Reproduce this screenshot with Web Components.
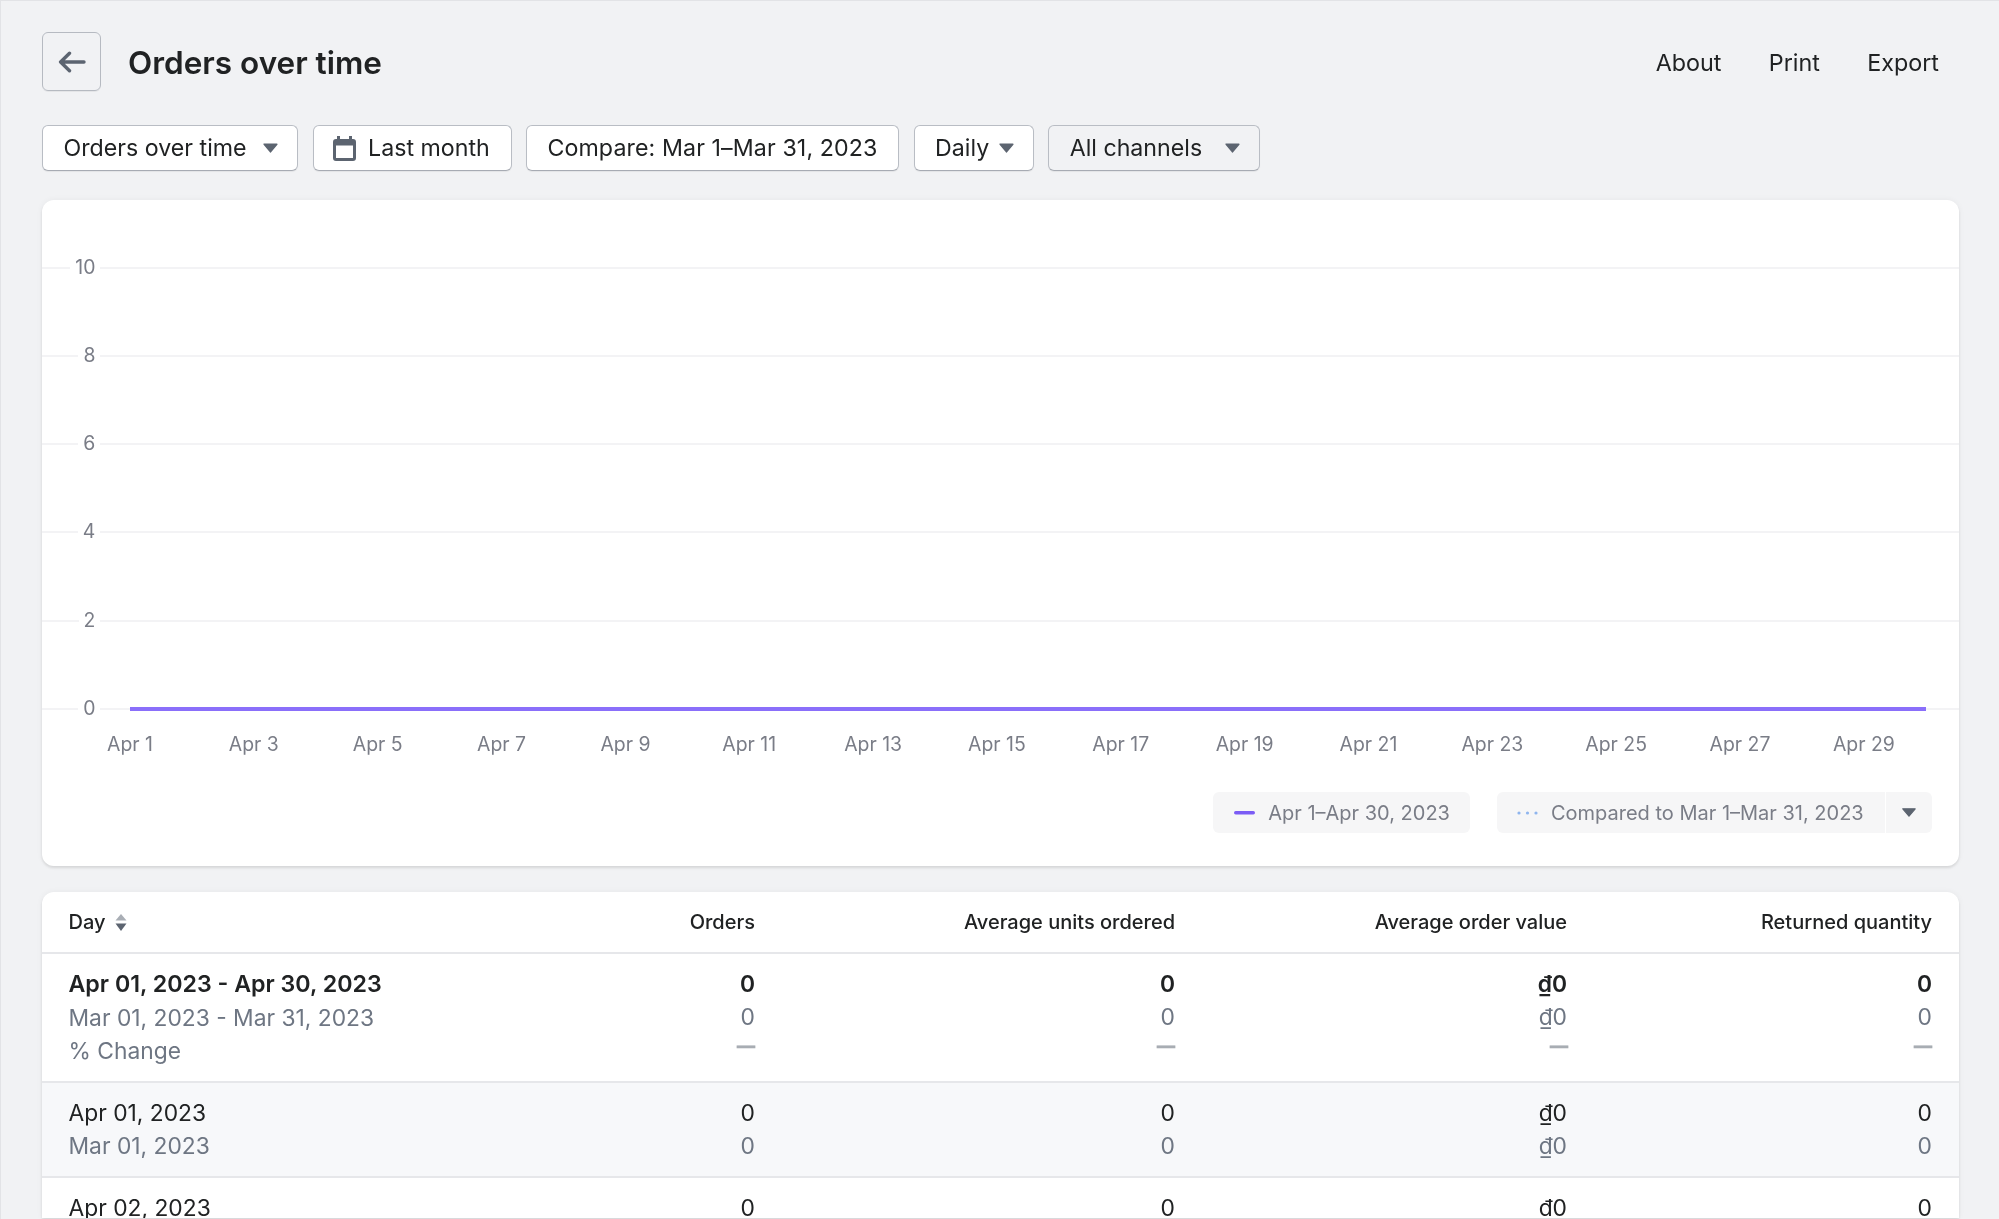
<!doctype html>
<html lang="en"><head><meta charset="utf-8"><title>Orders over time</title>
<style>
html,body{margin:0;height:1219px;overflow:hidden;background:#f1f2f4}
body{font-family:Inter,"Liberation Sans",sans-serif;color:#202223}
</style></head>
<body>
<report-page>
  <report-header slot="header" title="Orders over time"></report-header>
  <filter-bar slot="filters">
    <filter-button caret style="--gap:16.6px">Orders over time</filter-button>
    <filter-button calendar>Last month</filter-button>
    <filter-button style="letter-spacing:.1px">Compare: Mar 1–Mar 31, 2023</filter-button>
    <filter-button caret style="--gap:9.5px">Daily</filter-button>
    <filter-button caret muted style="--gap:23px">All channels</filter-button>
  </filter-bar>
  <chart-card slot="chart"></chart-card>
  <data-table slot="table">
    <table-row head first="Day" cells="Orders|Average units ordered|Average order value|Returned quantity"></table-row>
    <table-row summary first="Apr 01, 2023 - Apr 30, 2023" cells="0|0|₫0|0" second="Mar 01, 2023 - Mar 31, 2023" cells2="0|0|₫0|0" third="% Change"></table-row>
    <table-row shade first="Apr 01, 2023" cells="0|0|₫0|0" second="Mar 01, 2023" cells2="0|0|₫0|0"></table-row>
    <table-row last first="Apr 02, 2023" cells="0|0|₫0|0"></table-row>
  </data-table>
</report-page>
<script>
const define=(name,css,html)=>{
  customElements.define(name,class extends HTMLElement{
    connectedCallback(){
      if(this.shadowRoot)return;
      const r=this.attachShadow({mode:'open'});
      r.innerHTML='<style>'+css+'</style>'+(typeof html==='function'?html(this):html);
    }
  });
};
define('report-page',`
  :host{display:block;height:1219px;box-sizing:border-box;padding:32px 40px 0 42px;overflow:hidden;box-shadow:inset 1px 1px 0 #e2e3e6;filter:blur(.2px)}
  .f{display:block;margin-top:34px}
  .c{display:block;margin-top:29px}
  .t{display:block;margin-top:26px}
`,`<slot name="header"></slot><div class="f"><slot name="filters"></slot></div><div class="c"><slot name="chart"></slot></div><div class="t"><slot name="table"></slot></div>`);

define('report-header',`
  :host{display:flex;align-items:center;height:59px}
  .back{box-sizing:border-box;width:59px;height:59px;border:1.5px solid #b6bac1;border-radius:6px;display:flex;align-items:center;justify-content:center;box-shadow:0 1px 0 rgba(0,0,0,.05)}
  h1{margin:2px 0 0 27px;font:600 31.5px/57px Inter,sans-serif;color:#202223;flex:1}
  nav{display:flex;gap:47.4px;margin-top:2px;padding-right:20px;font:400 23.3px/57px Inter,sans-serif;color:#202223}
`,t=>`<div class="back"><svg width="28" height="22" viewBox="0 0 28 22" fill="none" stroke="#5c6470" stroke-width="3.4" stroke-linecap="round" stroke-linejoin="round"><path d="M26 11H3M11.5 2.2 2.6 11l8.9 8.8"/></svg></div><h1>${t.getAttribute('title')}</h1><nav><span>About</span><span>Print</span><span>Export</span></nav>`);

define('filter-bar',`:host{display:flex;gap:14.4px}`,`<slot></slot>`);

define('filter-button',`
  :host{display:inline-flex;align-items:center;box-sizing:border-box;height:46px;padding:2px 20.8px 0 20.5px;background:#fff;border:1.5px solid #b9bdc4;border-bottom-color:#a7abb3;border-radius:6px;font:400 23.2px/1 Inter,sans-serif;color:#202223;box-shadow:0 1px 1px rgba(0,0,0,.06);white-space:nowrap}
  :host([caret]){padding-right:19px}
  :host([muted]){background:#f1f2f4}
  svg{display:block;flex:none;margin-top:-2px}
  .caret{margin-left:var(--gap,16px)}
  .cal{margin:-2px 12.3px 0 -1.4px}
`,t=>`${t.hasAttribute('calendar')?`<svg class="cal" width="23" height="25" viewBox="0 0 23 25"><path fill="#5c6470" d="M4 0h3v3h9V0h3v3h1a3 3 0 0 1 3 3v16a3 3 0 0 1-3 3H3a3 3 0 0 1-3-3V6a3 3 0 0 1 3-3h1zM3 9.5V22h17V9.5z"/></svg>`:''}<slot></slot>${t.hasAttribute('caret')?`<svg class="caret" width="15" height="10" viewBox="0 0 15 10"><path fill="#5c6470" stroke="#5c6470" stroke-width="1.6" stroke-linejoin="round" d="M1.2 1.2h12.6L7.5 8.8z"/></svg>`:''}`);

const gridRow=(label,zero)=>`<div class="row"><div class="lab"><i></i><span>${label}</span></div><i></i>${zero?'<b class="series"></b>':''}</div>`;
define('chart-card',`
  :host{display:block;box-sizing:border-box;height:666px;padding-top:23.6px;background:#fff;border-radius:12px;box-shadow:0 0 6px rgba(23,24,24,.05),0 2px 3px rgba(0,0,0,.10);font:400 19.4px/24px Inter,sans-serif;color:#7a7d87}
  .row{position:relative;display:flex;align-items:center;height:88.26px}
  .lab{display:flex;align-items:center;flex:none;width:58.4px}
  .lab span{padding:0 5px 2px}
  i{display:block;flex:1;height:2px;background:#f3f3f5}
  .series{position:absolute;left:88px;top:42.4px;width:1796px;height:3.4px;background:#8a6ffa}
  .axis{display:grid;grid-template-columns:repeat(15,123.85px);margin:-21.1px 0 0 26.1px;text-align:center}
  .legend{display:flex;justify-content:flex-end;gap:27px;margin-top:36px;padding-right:26.6px;font-size:20px;line-height:40px}
  .chip{display:flex;align-items:center;height:41px;background:#f6f6f7;border-radius:6px;padding:0 20px 0 21px}
  .chip svg{display:block;margin-right:13px}
  .chip span{padding-top:1.5px}
  .more{display:flex;align-items:center;justify-content:center;width:47.7px;height:41px;margin-left:-27px;background:#f6f6f7;border-left:1.5px solid #fff;box-sizing:border-box;border-radius:0 6px 6px 0}
  .cmp{border-radius:6px 0 0 6px;padding:0 21px 0 20px}
`,()=>{
  const days=[];for(let d=1;d<30;d+=2)days.push(`<span>Apr ${d}</span>`);
  return [10,8,6,4,2].map(n=>gridRow(n)).join('')+gridRow(0,true)+
  `<div class="axis">${days.join('')}</div>
   <div class="legend">
     <div class="chip"><svg width="21" height="4" viewBox="0 0 21 4"><rect width="21" height="3.4" rx="1.7" fill="#7b5cf5"/></svg><span>Apr 1–Apr 30, 2023</span></div>
     <div class="chip cmp"><svg width="21" height="4" viewBox="0 0 21 4" fill="#8fb5ee"><circle cx="2" cy="2" r="1.6"/><circle cx="10.5" cy="2" r="1.6"/><circle cx="19" cy="2" r="1.6"/></svg><span>Compared to Mar 1–Mar 31, 2023</span></div>
     <div class="more"><svg width="14" height="9" viewBox="0 0 14 9"><path fill="#5c6470" stroke="#5c6470" stroke-width="1.2" stroke-linejoin="round" d="M.8.8h12.4L7 8.2z"/></svg></div>
   </div>`;
});

define('data-table',`:host{display:block;background:#fff;border-radius:12px 12px 0 0;box-shadow:0 0 6px rgba(23,24,24,.05),0 2px 3px rgba(0,0,0,.10);overflow:hidden}`,`<slot></slot>`);

define('table-row',`
  :host{display:grid;grid-template-columns:400.5px 286px 420px 392px 365px;padding:12.5px 27px 14.5px 26.5px;border-bottom:2px solid #e6e7ea;font:400 22.8px/33px Inter,sans-serif;color:#202223}
  :host([head]){padding-top:0;padding-bottom:0;font:500 20px/60px Inter,sans-serif}
  :host([shade]){background:#f7f8fa}
  :host([last]){padding-top:20px;padding-bottom:0;line-height:20px;border-bottom:0}
  :host([summary]) .a{font-weight:600;font-size:23.2px}
  :host([summary]) .n1{font-weight:600}
  .l2{color:#6e7683}
  .n{text-align:right}
  .d{display:block;height:33px;font-size:18px;font-weight:700;line-height:26px;color:#a8adb3;-webkit-text-stroke:.7px #a8adb3}
  .f{display:flex;align-items:center;gap:10px}
  svg{display:block}
`,t=>{
  const g=n=>t.getAttribute(n),split=n=>(g(n)||'').split('|');
  const first=split('cells'),sec=g('cells2')?split('cells2'):null,three=g('third');
  let left=`<span class="a">${g('first')}</span>`;
  if(t.hasAttribute('head'))left+=`<svg width="12" height="17" viewBox="0 0 12 17"><path fill="#a9aeb5" d="M6 0l5.5 6.6H.5z"/><path fill="#5c6470" d="M6 17 .5 9.4h11z"/></svg>`;
  let h=`<div><div class="${t.hasAttribute('head')?'f':''}">${left}</div>`;
  if(g('second'))h+=`<div class="l2">${g('second')}</div>`;
  if(three)h+=`<div class="l2">${three}</div>`;
  h+='</div>';
  first.forEach((c,i)=>{
    h+=`<div class="n"><div class="n1">${c}</div>`;
    if(sec)h+=`<div class="l2">${sec[i]}</div>`;
    if(three)h+=`<span class="d"${c[0]==='₫'?' style="margin-right:-1px"':''}>—</span>`;
    h+='</div>';
  });
  return h;
});
</script>
</body></html>
